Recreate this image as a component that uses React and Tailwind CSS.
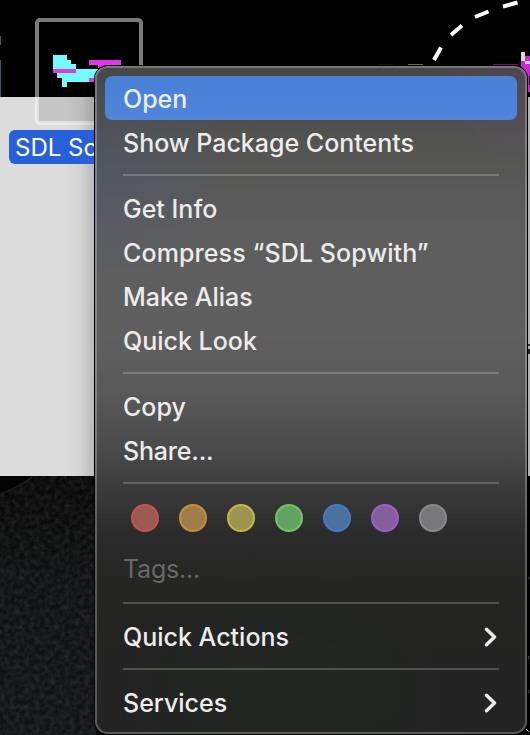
const menuBg = {
  backgroundImage:
    'radial-gradient(130px 120px at 0px 100px, rgba(70,86,125,.3), transparent), radial-gradient(90px 80px at 429px 15px, rgba(105,70,115,.26), transparent), radial-gradient(190px 130px at 190px 630px, rgba(30,46,32,.3), transparent), linear-gradient(#464644 0px, #535352 75px, #5d5d5d 160px, #5f5f5f 270px, #595959 325px, #4a4a4a 385px, #3a3a3a 425px, #2c2c2c 465px, #242423 520px, #232323 664px)',
};

function Item({ children, track = 'tracking-normal', arrow, active, dim }) {
  return (
    <div
      className={`flex h-11 items-center justify-between rounded-[7px] pl-[18px] pr-[20px] ${
        active ? 'bg-gradient-to-b from-[#4880d5] to-[#4f86dc]' : ''
      } ${dim ? 'text-[#686868]' : 'pt-[2px] text-[#ececec]'}`}
    >
      <span className={`whitespace-nowrap text-[25px] leading-[42px] ${dim ? 'mt-[-2px]' : 'font-medium'} ${track}`}>
        {children}
      </span>
      {arrow && (
        <svg width="13" height="20" viewBox="0 0 13 20" fill="none" stroke="#ececec" strokeWidth="3.4" strokeLinecap="round" strokeLinejoin="round">
          <path d="M2.500 2.200 10.500 10 2.500 17.800" />
        </svg>
      )}
    </div>
  );
}

function Separator() {
  return (
    <div className="h-[22px] px-[18px] pt-[10px]">
      <div className="h-[2px] bg-white/20" />
    </div>
  );
}

const tags = [
  ['bg-[#9c5a54]', 'border-[#c5554a]'],
  ['bg-[#9d7d4a]', 'border-[#c6903f]'],
  ['bg-[#9d944f]', 'border-[#c8b548]'],
  ['bg-[#65a163]', 'border-[#6cc866]'],
  ['bg-[#4c719f]', 'border-[#447bc4]'],
  ['bg-[#855f9b]', 'border-[#a05fc8]'],
  ['bg-[#78787a]', 'border-[#8b8b8d]'],
];

function Backdrop() {
  return (
    <svg className="absolute inset-0" width="530" height="735" viewBox="0 0 530 735">
      <defs>
        <filter id="grain" x="0" y="0" width="100%" height="100%">
          <feTurbulence type="fractalNoise" baseFrequency="0.2" numOctaves="3" seed="4" />
          <feColorMatrix values="0 0 0 0 1  0 0 0 0 1  0 0 0 0 1  .16 0 0 0 -.05" />
        </filter>
        <linearGradient id="ground" x2="0" y2="1">
          <stop offset="0" stopColor="#070707" />
          <stop offset=".4" stopColor="#0f1011" />
          <stop offset="1" stopColor="#121315" />
        </linearGradient>
        <linearGradient id="edge">
          <stop offset="0" stopColor="#000" stopOpacity="0" />
          <stop offset=".5" stopColor="#000" stopOpacity=".04" />
          <stop offset="1" stopColor="#000" stopOpacity=".18" />
        </linearGradient>
      </defs>
      <rect width="530" height="735" fill="#000" />
      <rect y="97" width="530" height="379" fill="#dcdcdc" />
      <rect y="476" width="96" height="259" fill="url(#ground)" />
      <rect y="476" width="96" height="259" filter="url(#grain)" />
      <path d="M0 476h32Q18 488 0 494z" fill="#040404" />
      <path d="M32 477Q18 488 0 494" fill="none" stroke="#1e1e1e" strokeWidth="1.5" />
      <path d="M0 36h1v9H0zM0 60h1v37H0z" fill="#285f62" />
      <rect x="37" y="20" width="104" height="103" rx="3" fill="#000" fillOpacity=".1" />
      <rect x="37" y="20" width="104" height="103" rx="3" fill="none" stroke="#fff" strokeOpacity=".48" strokeWidth="4" />
      <g shapeRendering="crispEdges">
        <path fill="#72fcfd" d="M53 55h14v5h4v4h5v5h24v13H67v5h-5v-9h-5v-5h-4z" />
        <path fill="#e535ea" d="M53 69h23v4H53zM89 60h32v5h-9v3H98v-3h-9zM89 78h9v4h-9z" />
        <path fill="#000" d="M102 66h4v2h-4z" />
      </g>
      <path d="M434 60 441 47.500M451 35 462 25.500M475 17 488.500 11.500M503 6.500 517.500 2.500" stroke="#fff" strokeWidth="4" />
      <path d="M378 65h15" stroke="#222" />
      <path d="M408 64.500h15" stroke="#666" />
      <path d="M493 64.500h25" stroke="#70166f" />
      <path fill="#c92ad0" d="M521 60h4v-4h5v36h-9z" />
      <path fill="#d9d9d9" d="M521 52h4v9h-4zM525 61h4v3h-4z" />
      <path fill="#6fd8dc" d="M529 61h1v3h-1z" />
      <path fill="#000" d="M529 76h1v9h-1z" />
      <rect x="66" y="97" width="30" height="379" fill="url(#edge)" />
      <rect x="526" y="97" width="4" height="379" fill="#000" fillOpacity=".2" />
      <path d="M528 345h2" stroke="#333" strokeWidth="2" />
      <path d="M528 351.500h2" stroke="#222" strokeWidth="5" />
      <path d="M528.500 577v2M528.500 656v3M528.500 690v3" stroke="#444" />
      <path d="M526 729l3 3" stroke="#bbb" />
    </svg>
  );
}

export default function App() {
  return (
    <div className="relative h-[735px] w-[530px] overflow-hidden bg-black font-['Inter',sans-serif]">
      <Backdrop />
      <div className="absolute left-[9px] top-[130px] h-[34px] w-[160px] whitespace-nowrap rounded-[6px] bg-[#2860d8] pl-[6px] text-[24px] leading-[36px] text-white">
        SDL Sopwith
      </div>
      <div
        className="absolute left-[95px] top-[66px] h-[668px] w-[432px] rounded-[13px] border-2 border-white/25 bg-origin-border px-2 py-2 shadow-[0_0_0_1px_#000]"
        style={menuBg}
      >
        <Item active>Open</Item>
        <Item>Show Package Contents</Item>
        <Separator />
        <Item>Get Info</Item>
        <Item track="tracking-[0.1px]">Compress “SDL Sopwith”</Item>
        <Item>Make Alias</Item>
        <Item>Quick Look</Item>
        <Separator />
        <Item>Copy</Item>
        <Item track="tracking-[-0.2px]">Share...</Item>
        <Separator />
        <div className="flex h-[54px] gap-5 pl-[26px] pt-[10px]">
          {tags.map(([fill, ring]) => (
            <span key={fill} className={`size-7 rounded-full border-2 ${fill} ${ring}`} />
          ))}
        </div>
        <Item dim track="tracking-[-0.2px]">Tags...</Item>
        <Separator />
        <Item arrow>Quick Actions</Item>
        <Separator />
        <Item arrow>Services</Item>
      </div>
    </div>
  );
}
